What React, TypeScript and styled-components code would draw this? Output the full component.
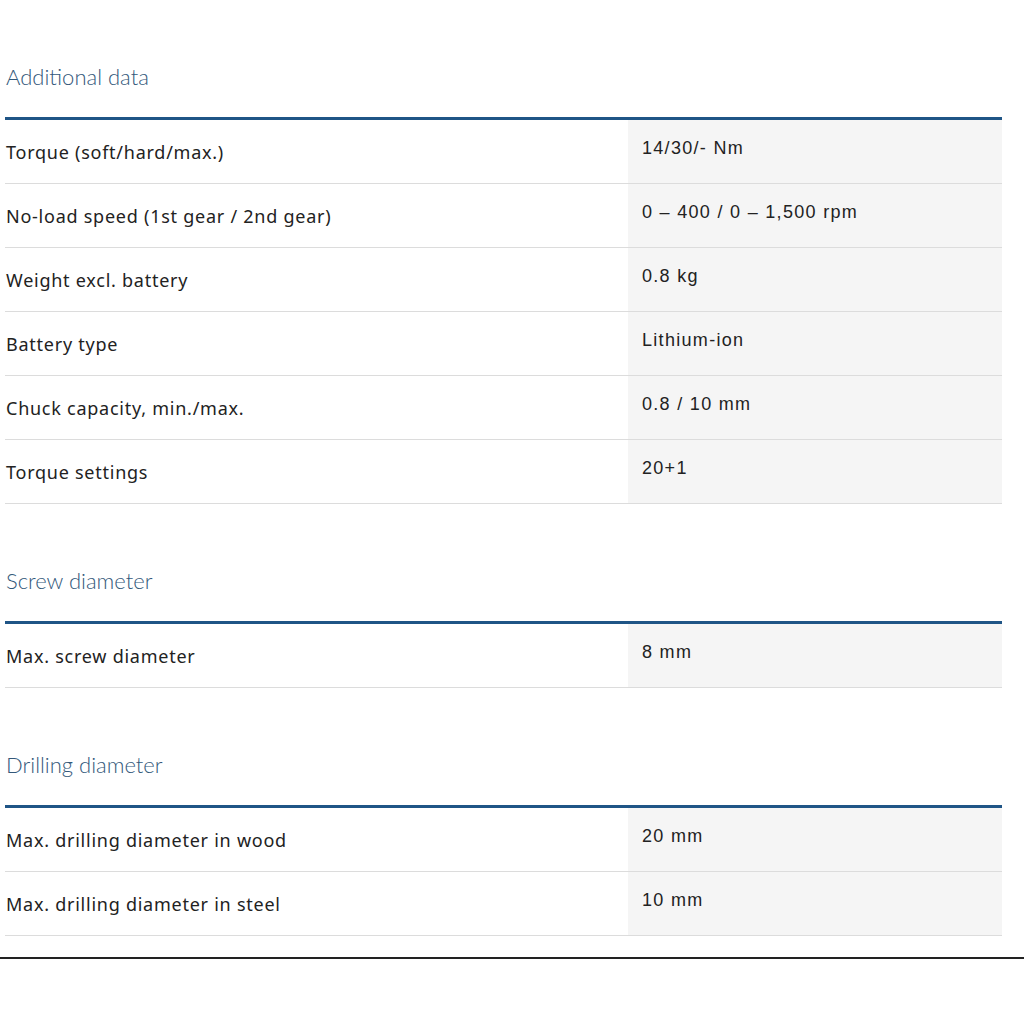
import React from "react";
import styled, { createGlobalStyle } from "styled-components";

const Global = createGlobalStyle`
  html, body { margin: 0; padding: 0; background: #ffffff; }
  body { font-family: "Noto Sans", "Liberation Sans", sans-serif; color: #222; }
`;

const Page = styled.div`
  padding: 65px 22px 0 5px;
  width: 997px;
`;

const Section = styled.section`
  margin-bottom: 65px;
  &:last-of-type { margin-bottom: 21px; }
`;

const Heading = styled.h2`
  margin: 0 0 28px 0;
  padding-left: 1px;
  font-family: "Lato", "Open Sans", sans-serif;
  font-weight: 300;
  font-size: 22px;
  line-height: 24px;
  color: #33587a;
`;

const Table = styled.div`
  border-top: 3px solid #1f5586;
`;

const Row = styled.div`
  display: grid;
  grid-template-columns: 623px 1fr;
  height: 64px;
  border-bottom: 1px solid #dcdcdc;
  box-sizing: border-box;
`;

const Label = styled.div`
  display: flex;
  align-items: center;
  padding-left: 1px;
  font-family: "Noto Sans", sans-serif;
  font-size: 18px;
  letter-spacing: 0.75px;
  color: #222;
`;

const Value = styled.div`
  background: #f5f5f5;
  padding: 16px 0 0 14px;
  font-family: "Liberation Sans", Arial, sans-serif;
  font-size: 18px;
  line-height: 24px;
  letter-spacing: 1.3px;
  color: #222;
`;

const Rule = styled.div`
  height: 2px;
  background: #222;
  width: 1024px;
`;

type Spec = [string, string];

const sections: { title: string; rows: Spec[] }[] = [
  {
    title: "Additional data",
    rows: [
      ["Torque (soft/hard/max.)", "14/30/- Nm"],
      ["No-load speed (1st gear / 2nd gear)", "0 – 400 / 0 – 1,500 rpm"],
      ["Weight excl. battery", "0.8 kg"],
      ["Battery type", "Lithium-ion"],
      ["Chuck capacity, min./max.", "0.8 / 10 mm"],
      ["Torque settings", "20+1"],
    ],
  },
  {
    title: "Screw diameter",
    rows: [["Max. screw diameter", "8 mm"]],
  },
  {
    title: "Drilling diameter",
    rows: [
      ["Max. drilling diameter in wood", "20 mm"],
      ["Max. drilling diameter in steel", "10 mm"],
    ],
  },
];

export default function App() {
  return (
    <>
      <Global />
      <Page>
        {sections.map((s) => (
          <Section key={s.title}>
            <Heading>{s.title}</Heading>
            <Table>
              {s.rows.map(([l, v]) => (
                <Row key={l}>
                  <Label>{l}</Label>
                  <Value>{v}</Value>
                </Row>
              ))}
            </Table>
          </Section>
        ))}
      </Page>
      <Rule />
    </>
  );
}
